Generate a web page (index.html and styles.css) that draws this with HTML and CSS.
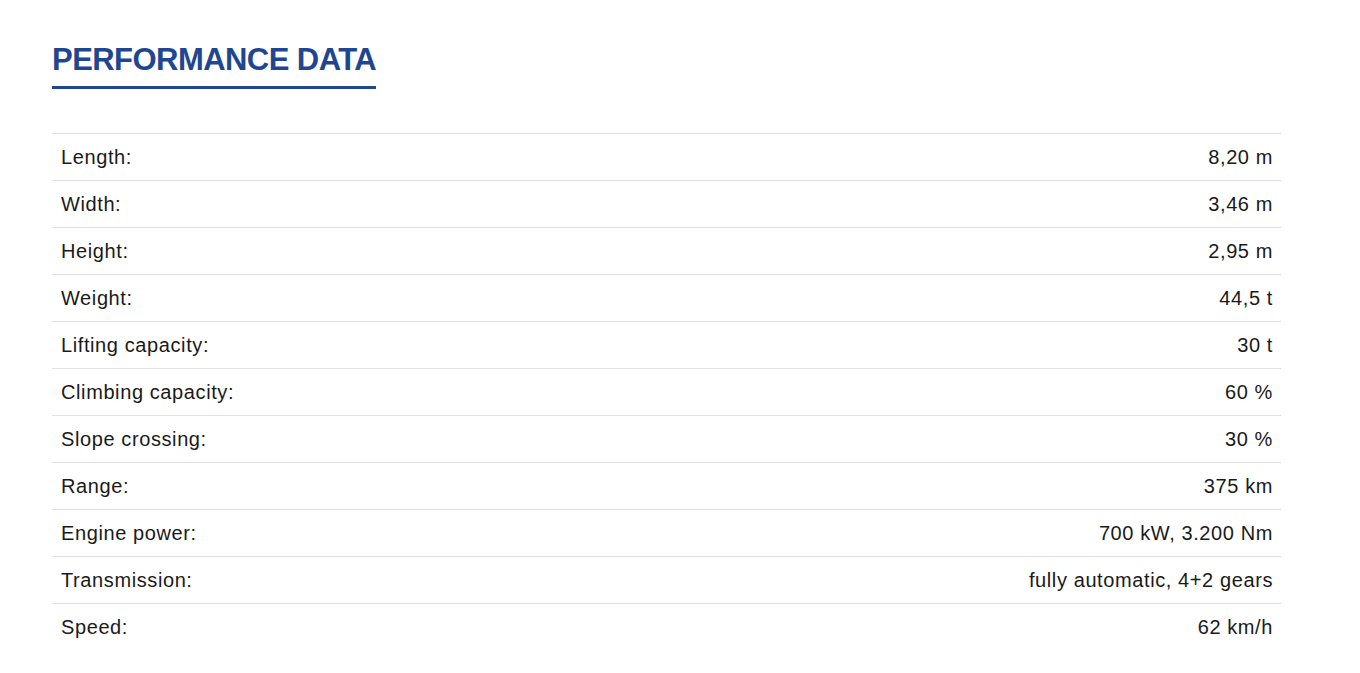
FILE: index.html
```html
<!DOCTYPE html>
<html lang="en">
<head>
<meta charset="utf-8">
<title>Performance data</title>
<link rel="stylesheet" href="styles.css">
</head>
<body>
<section class="perf">
  <h2 class="perf-title">PERFORMANCE DATA</h2>
  <table class="spec">
    <tbody>
      <tr><td class="spec-label">Length:</td><td class="spec-value">8,20 m</td></tr>
      <tr><td class="spec-label">Width:</td><td class="spec-value">3,46 m</td></tr>
      <tr><td class="spec-label">Height:</td><td class="spec-value">2,95 m</td></tr>
      <tr><td class="spec-label">Weight:</td><td class="spec-value">44,5 t</td></tr>
      <tr><td class="spec-label">Lifting capacity:</td><td class="spec-value">30 t</td></tr>
      <tr><td class="spec-label">Climbing capacity:</td><td class="spec-value">60 %</td></tr>
      <tr><td class="spec-label">Slope crossing:</td><td class="spec-value">30 %</td></tr>
      <tr><td class="spec-label">Range:</td><td class="spec-value">375 km</td></tr>
      <tr><td class="spec-label">Engine power:</td><td class="spec-value">700 kW, 3.200 Nm</td></tr>
      <tr><td class="spec-label">Transmission:</td><td class="spec-value">fully automatic, 4+2 gears</td></tr>
      <tr><td class="spec-label">Speed:</td><td class="spec-value">62 km/h</td></tr>
    </tbody>
  </table>
</section>
</body>
</html>
```

FILE: styles.css
```css
html, body {
  margin: 0;
  padding: 0;
  background: #ffffff;
}

body {
  font-family: "Liberation Sans", Arial, sans-serif;
  color: #1a1a1a;
}

.perf {
  padding: 41px 0 0 52px;
  width: 1229px;
}

.perf-title {
  display: inline-block;
  margin: 0;
  padding-bottom: 8px;
  font-size: 31px;
  line-height: 37px;
  font-weight: bold;
  letter-spacing: -0.55px;
  color: #1f4691;
  border-bottom: 3px solid #1f4691;
}

.spec {
  margin-top: 44px;
  width: 100%;
  border-collapse: collapse;
}

.spec td {
  height: 46px;
  padding: 0 8px 0 9px;
  border-top: 1px solid #e2e2e2;
  font-size: 20px;
  letter-spacing: 0.6px;
  vertical-align: middle;
}

.spec-value {
  text-align: right;
}
```
